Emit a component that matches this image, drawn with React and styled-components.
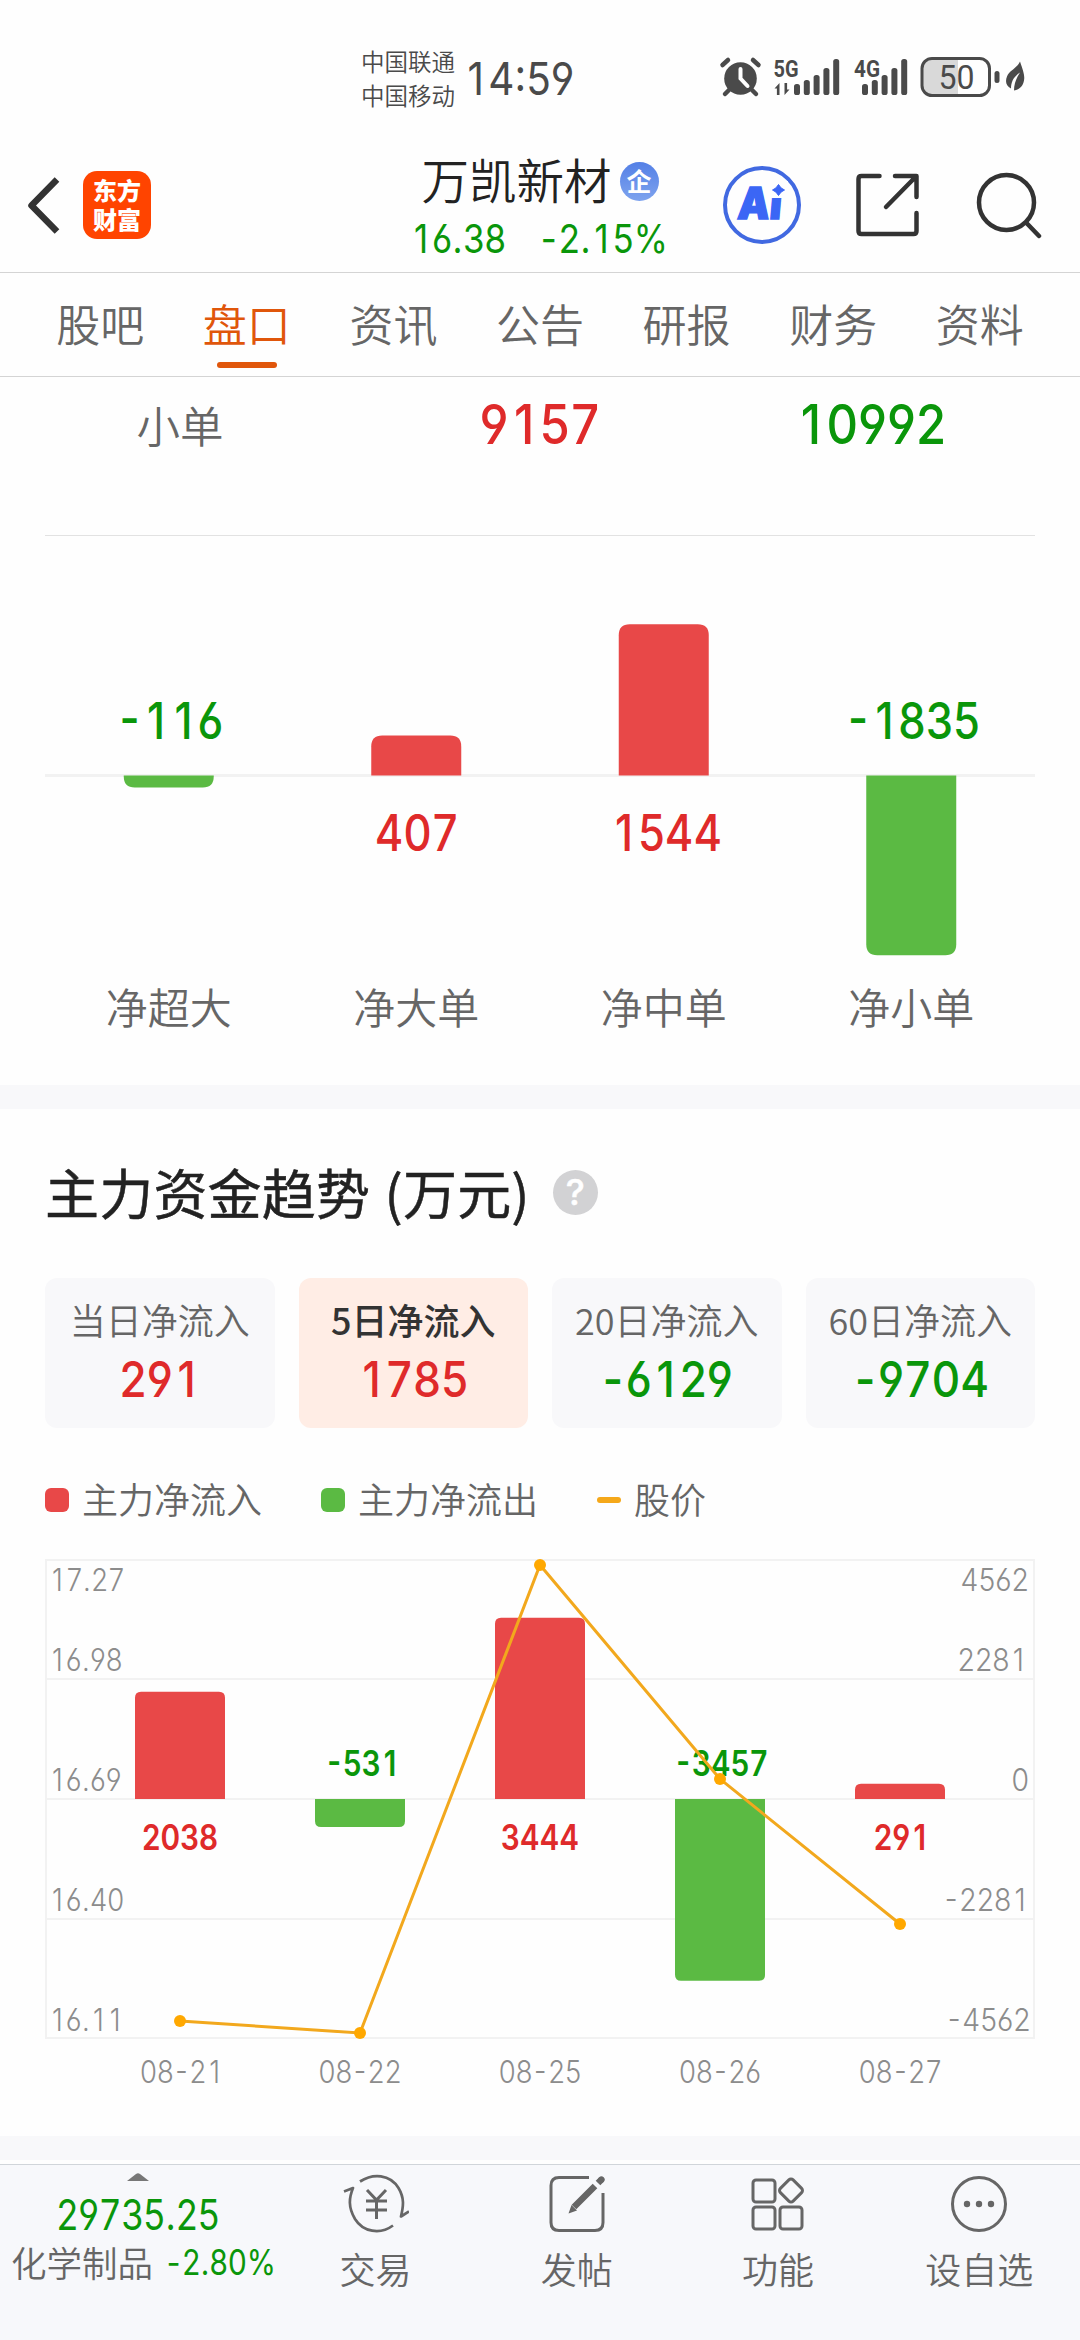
import React, { useState } from 'react';
import styled, { createGlobalStyle, css } from 'styled-components';

const CJK = '"Noto Sans CJK SC", sans-serif';
const LATIN = 'Inter, "Noto Sans CJK SC", sans-serif';
const RED = '#df2a2a';
const GREEN = '#0a960a';
const BAR_RED = '#e84848';
const BAR_GREEN = '#5bba43';

const GlobalStyle = createGlobalStyle`
  body {
    margin: 0;
    background: #fefefe;
    font-family: ${CJK};
    font-weight: 350;
    color: #666;
  }

  * {
    box-sizing: border-box;
  }
`;

const digits = css`
  font-family: ${LATIN};
  font-feature-settings: "cv03", "cv04";
  font-kerning: none;
`;

// side room (em) that evens out the narrow characters in a figure
const SIDE_ROOM = { 1: 0.11, '-': 0.06, 7: 0.03, '.': 0.01 };
const room = (ch) => SIDE_ROOM[ch] || 0;

const Figure = styled.span`
  ${digits}
  display: inline-block;
  font-size: ${(p) => p.$size}px;
  font-weight: ${(p) => p.$weight || 400};
  line-height: 1;
  color: ${(p) => p.$color || 'inherit'};
  transform: scaleX(${(p) => p.$stretch || 0.87});
  transform-origin: ${(p) => p.$origin || 'center'};
  white-space: nowrap;
`;

const Roomy = styled.span`
  margin: 0 ${(p) => p.$room}em;
`;

const Num = ({ children, ...rest }) => (
  <Figure {...rest}>
    {String(children).split(/([-17.])/).filter(Boolean).map((part, i) =>
      room(part) ? <Roomy key={i} $room={room(part)}>{part}</Roomy> : part
    )}
  </Figure>
);

const Page = styled.div`
  width: 1080px;
  height: 2340px;
  overflow: hidden;
  display: flex;
  flex-direction: column;
`;

const StatusBar = styled.div`
  height: 150px;
  padding: 43px 54px 37px 361px;
  display: flex;
  align-items: center;
  color: #4a4a4a;
`;

const Carriers = styled.div`
  width: 102px;
  font-size: 23.5px;
  line-height: 34px;
`;

const StatusIcons = styled.div`
  margin-left: auto;
  display: flex;

  svg {
    overflow: visible;
  }
`;

const Header = styled.header`
  height: 123px;
  border-bottom: 1px solid #d4d4d4;
  display: grid;
  grid-template-columns: 1fr auto 1fr;
`;

const HeaderLeft = styled.div`
  display: flex;
  align-items: center;
  gap: 22px;
  padding: 0 0 12px 25px;
`;

const Logo = styled.div`
  width: 68px;
  height: 68px;
  border-radius: 14px;
  background: #ff4400;
  color: #fff;
  font-size: 24px;
  font-weight: 900;
  line-height: 29px;
  padding-top: 4px;
  text-align: center;
`;

const HeaderTitle = styled.div`
  display: flex;
  flex-direction: column;
  align-items: center;
`;

const StockName = styled.div`
  height: 60px;
  margin-top: -1px;
  display: flex;
  align-items: center;
  gap: 8px;
  font-size: 47.5px;
  line-height: 60px;
  color: #222;
`;

const Badge = styled.span`
  width: 39px;
  height: 39px;
  margin-top: 4px;
  border-radius: 50%;
  background: linear-gradient(#5480e6, #7ea3ee);
  color: #fff;
  font-size: 25px;
  font-weight: 700;
  line-height: 37px;
  text-align: center;
`;

const Quote = styled.div`
  height: 60px;
  display: flex;
  align-items: center;
  gap: 16px;
`;

const HeaderActions = styled.div`
  display: flex;
  align-items: center;
  justify-content: flex-end;
  padding: 0 37px 12px 0;
  gap: 53px;
`;

const Tabs = styled.nav`
  height: 104px;
  padding: 0 27px;
  border-bottom: 1px solid #d4d4d4;
  display: flex;
`;

const Tab = styled.button`
  flex: 1;
  padding: 20px 0 0;
  border: none;
  background: none;
  display: flex;
  flex-direction: column;
  align-items: center;
  gap: 9px;
  font-family: inherit;
  font-weight: 350;
  font-size: 44px;
  line-height: 60px;
  color: ${(p) => (p.$active ? '#e0560b' : '#666')};

  &::after {
    content: '';
    width: 60px;
    height: 6px;
    border-radius: 3px;
    background: ${(p) => (p.$active ? '#e0560b' : 'transparent')};
  }
`;

const OrderRow = styled.div`
  height: 159px;
  margin: 0 45px;
  padding-bottom: 63px;
  border-bottom: 1px solid #e2e2e2;
  display: grid;
  grid-template-columns: 270px 450px 212px;
  align-items: center;
  justify-items: center;
`;

const OrderLabel = styled.span`
  font-size: 43.5px;
  line-height: 60px;
`;

const FlowSection = styled.section`
  height: 549px;
  padding: 0 45px;
`;

const Divider = styled.div`
  height: 24px;
  background: #f8f8fa;
`;

const TrendSection = styled.section`
  height: 1027px;
  padding: 0 45px;
`;

const TrendTitle = styled.h2`
  height: 169px;
  margin: 0;
  padding-top: 41px;
  display: flex;
  align-items: flex-start;
  gap: 23px;
  font-size: 54px;
  font-weight: 400;
  letter-spacing: 0.2px;
  word-spacing: 2px;
  line-height: 84px;
  -webkit-text-stroke: 0.5px;
  color: #222;
`;

const Help = styled.span`
  width: 45px;
  height: 45px;
  margin-top: 20px;
  border-radius: 50%;
  background: #d2d2d4;
  color: #fff;
  font: 500 36px/45px ${LATIN};
  text-align: center;
`;

const Cards = styled.div`
  display: grid;
  grid-template-columns: repeat(4, 1fr);
  gap: 24px;
`;

const Card = styled.button`
  height: 150px;
  padding: 19px 0 0;
  border: none;
  border-radius: 12px;
  background: ${(p) => (p.$active ? '#ffede5' : '#f8f8fa')};
  display: flex;
  flex-direction: column;
  align-items: center;
  gap: 13px;
`;

const CardLabel = styled.span`
  font-family: ${CJK};
  font-size: 36px;
  line-height: 44px;
  font-weight: ${(p) => (p.$active ? 500 : 350)};
  color: ${(p) => (p.$active ? '#333' : '#666')};
`;

const Legend = styled.div`
  height: 131px;
  padding-top: 42px;
  display: flex;
  align-items: flex-start;
  gap: 59px;
`;

const LegendItem = styled.div`
  display: flex;
  align-items: center;
  gap: 13px;
  font-size: 36px;
  line-height: 56px;

  &::before {
    content: '';
    width: 24px;
    height: ${(p) => (p.$line ? 6 : 24)}px;
    margin-top: 4px;
    border-radius: ${(p) => (p.$line ? 3 : 6)}px;
    background: ${(p) => p.$color};
  }
`;

const Chart = styled.svg`
  display: block;
  overflow: visible;
`;

const ChartFigure = styled.text`
  ${digits}
  font-size: ${(p) => p.$size}px;
  font-weight: ${(p) => p.$weight || 400};
  fill: ${(p) => p.$color};
  text-anchor: ${(p) => p.$anchor || 'middle'};
`;

const ChartLabel = styled.text`
  font-size: 42px;
  fill: #666;
  text-anchor: middle;
`;

const Footer = styled.footer`
  flex: 1;
  margin-top: 4px;
  border-top: 1px solid #d0d5da;
  background: #f7f8fb;
  display: flex;
`;

const IndexBox = styled.div`
  width: 275px;
  padding-top: 8px;
  display: flex;
  flex-direction: column;
  align-items: center;
`;

const IndexValue = styled.div`
  height: 61px;
  padding-top: 13px;
  line-height: 1;
`;

const IndexName = styled.div`
  align-self: flex-start;
  width: 275px;
  height: 40px;
  padding-left: 11px;
  display: flex;
  align-items: center;
  gap: 12px;
  font-size: 35.5px;
  line-height: 40px;
  white-space: nowrap;
`;

const FooterItem = styled.div`
  flex: 1;
  padding-top: 9px;
  display: flex;
  flex-direction: column;
  align-items: center;
  gap: 10px;
  font-size: 36px;
  line-height: 48px;
`;

const SignalBars = ({ x }) =>
  [11, 15, 20, 27, 36].map((h, i) => (
    <rect key={h} x={x + i * 9.8} y={38 - h} width="6" height={h} rx="2.6" />
  ));

const StatusSvg = () => (
  <svg width="307" height="42" viewBox="0 0 307 42" fill="#4a4a4a">
    <circle cx="21.500" cy="21.500" r="16.300" />
    <path d="M3.500 8l5.500-5M39.500 8l-5.500-5M6 37l4-4M37 37l-4-4" stroke="#4a4a4a" strokeWidth="4.500" strokeLinecap="round" />
    <path d="M21.500 12v9.500l7 7.500" stroke="#fff" strokeWidth="4" fill="none" strokeLinecap="round" />
    <text x="54.500" y="20" fontFamily="Roboto" fontWeight="700" fontSize="24" textLength="25" lengthAdjust="spacingAndGlyphs">5G</text>
    <path d="M55.500 31.500l5-5.500v12h-2.600v-6.500zM70.500 32.500l-5 5.500v-12h2.600v6.500z" />
    <SignalBars x={75} />
    <text x="135" y="20" fontFamily="Roboto" fontWeight="700" fontSize="24" textLength="26" lengthAdjust="spacingAndGlyphs">4G</text>
    <SignalBars x={143} />
    <path d="M213 1.500h26v37h-26q-10-1-10-10v-17q0-9 10-10z" fill="#d9d9d9" />
    <rect x="203" y="1.500" width="67.500" height="37" rx="10" fill="none" stroke="#4a4a4a" strokeWidth="3" />
    <text x="219.500" y="32" fontFamily="Roboto" fontWeight="400" fontSize="34" textLength="36" lengthAdjust="spacingAndGlyphs">50</text>
    <rect x="275.500" y="14" width="5" height="12" rx="2.500" />
    <path d="M301 4.500c3 9 5 14 4 19-1 6-5 9-10 10 0-6 2-12 6-18-6 4-9 9-9 16-5-3-6-7-4-12 2-6 10-8 13-15z" />
  </svg>
);

const BackIcon = () => (
  <svg width="36" height="60" viewBox="0 0 36 60" fill="none" stroke="#333" strokeWidth="6.500">
    <path d="M32 4.500L6.500 30.500L32 56.500" strokeLinejoin="round" />
  </svg>
);

const AiIcon = () => (
  <svg width="80" height="80" viewBox="0 0 80 80" fill="#3b66f5">
    <circle cx="39" cy="40" r="37" fill="none" stroke="#4169e1" strokeWidth="4" />
    <g transform="skewX(-5)">
      <text x="18.500" y="54" fontFamily="Inter" fontWeight="900" fontSize="44" textLength="44" lengthAdjust="spacingAndGlyphs" stroke="#3b66f5" strokeWidth="1.500">Ai</text>
    </g>
    <path d="M47 16h18v17h-18z" fill="#fefefe" />
    <path d="M55.500 19.500q2 4 6 5.500-4 1.500-6 5.500-2-4-6-5.500 4-1.500 6-5.500z" stroke="#3b66f5" strokeLinejoin="round" />
  </svg>
);

const ShareIcon = () => (
  <svg width="66" height="66" viewBox="0 0 66 66" fill="none" stroke="#333" strokeWidth="4.500" strokeLinecap="round" strokeLinejoin="round">
    <path d="M23.500 4H5.500q-3 0-3 3v52q0 3 3 3h52q3 0 3-3V41M39 4h21.500v21M60 4.500L30 35" />
  </svg>
);

const SearchIcon = () => (
  <svg width="68" height="68" viewBox="0 0 68 68" fill="none" stroke="#333" strokeWidth="4.500" strokeLinecap="round">
    <circle cx="31.500" cy="31.500" r="27.500" />
    <path d="M52 52.500l12 12.500" />
  </svg>
);

const TradeIcon = () => (
  <svg width="66" height="60" viewBox="0 0 66 60" fill="none" stroke="#666" strokeWidth="2.700">
    <path d="M17 7.500C30-1 47 0 55.500 14c6 10 5 18 2.500 28.500l8-5M50 51.500C37 61 20 58 12 45 5 33 6 24 10 14l-9 3.500" strokeLinejoin="round" />
    <path d="M24 16l9.500 10 9.500-10M33.500 26v19M23 27h21M23 36h21" strokeWidth="3" />
  </svg>
);

const PostIcon = () => (
  <svg width="60" height="60" viewBox="0 0 60 60" fill="none" stroke="#666" strokeWidth="3">
    <path d="M42 3.500H12q-8 0-8 8v37q0 8 8 8h36q8 0 8-8V19" />
    <path d="M27 33L48 12M51 9l3.500-3.500" strokeWidth="6.500" />
    <path d="M54.300 5.700l.1-.1" strokeWidth="6.500" strokeLinecap="round" />
    <path d="M24.500 31l-3 8.500 8.500-3z" fill="#666" stroke="none" />
  </svg>
);

const AppsIcon = () => (
  <svg width="60" height="60" viewBox="0 0 60 60" fill="none" stroke="#666" strokeWidth="3">
    <rect x="5" y="6" width="22" height="22" rx="3" />
    <rect x="5" y="33" width="22" height="22" rx="3" />
    <rect x="32" y="33" width="22" height="22" rx="3" />
    <rect x="34" y="7.500" width="18" height="18" rx="3" transform="rotate(45 43 16.500)" />
  </svg>
);

const MoreIcon = () => (
  <svg width="60" height="60" viewBox="0 0 60 60" fill="#666">
    <circle cx="30" cy="30" r="26.500" fill="none" stroke="#666" strokeWidth="3" />
    <circle cx="18" cy="30" r="3.200" />
    <circle cx="30" cy="30" r="3.200" />
    <circle cx="42" cy="30" r="3.200" />
  </svg>
);

const tabs = ['股吧', '盘口', '资讯', '公告', '研报', '财务', '资料'];

const orderFlow = [
  { label: '净超大', value: -116 },
  { label: '净大单', value: 407 },
  { label: '净中单', value: 1544 },
  { label: '净小单', value: -1835 },
];

const periods = [
  { label: '当日净流入', value: 291 },
  { label: '5日净流入', value: 1785 },
  { label: '20日净流入', value: -6129 },
  { label: '60日净流入', value: -9704 },
];

const days = [
  { date: '08-21', flow: 2038, priceY: 462 },
  { date: '08-22', flow: -531, priceY: 474 },
  { date: '08-25', flow: 3444, priceY: 6 },
  { date: '08-26', flow: -3457, priceY: 220 },
  { date: '08-27', flow: 291, priceY: 365 },
];

const axis = [
  { price: '17.27', flow: '4562', y: 32 },
  { price: '16.98', flow: '2281', y: 112 },
  { price: '16.69', flow: '0', y: 232 },
  { price: '16.40', flow: '-2281', y: 352 },
  { price: '16.11', flow: '-4562', y: 472 },
];

const footerItems = [
  { label: '交易', Icon: TradeIcon },
  { label: '发帖', Icon: PostIcon },
  { label: '功能', Icon: AppsIcon },
  { label: '设自选', Icon: MoreIcon },
];

const ChartNum = ({ x, y, stretch = 0.87, children, ...rest }) => {
  const text = String(children);
  const dx = [...text].map((ch, i) => ((i ? room(text[i - 1]) : 0) + room(ch)) * rest.$size);
  // the room after the last character is not part of dx
  const tail = room(text[text.length - 1]) * rest.$size;
  const left = rest.$anchor === 'end' ? x - tail * 1.5 : x;
  return (
    <ChartFigure {...rest} dx={dx.join(' ')} transform={`translate(${left} ${y}) scale(${stretch} 1)`}>
      {text}
    </ChartFigure>
  );
};

// bar that grows from the zero line, rounded only at its far end
const barPath = (cx, zero, h, up, r) => {
  const s = up ? -1 : 1;
  const left = cx - 45;
  const right = cx + 45;
  const end = zero + s * h;
  const c = Math.min(r, h);
  return `M${left} ${zero}V${end - s * c}Q${left} ${end} ${left + c} ${end}H${right - c}Q${right} ${end} ${right} ${end - s * c}V${zero}Z`;
};

const OrderFlowChart = () => (
  <Chart width="990" height="549">
    <rect x="0" y="238" width="990" height="3" fill="#f2f2f2" />
    {orderFlow.map(({ label, value }, i) => {
      const cx = 123.75 + i * 247.5;
      const up = value > 0;
      const height = Math.max(Math.abs(value) * 0.098, 12);
      return (
        <g key={label}>
          <path d={barPath(cx, 239.5, height, up, 11)} fill={up ? BAR_RED : BAR_GREEN} />
          <ChartNum $size={50} $weight={500} $color={up ? RED : GREEN} x={cx} y={up ? 315 : 203}>
            {value}
          </ChartNum>
          <ChartLabel x={cx} y={488}>{label}</ChartLabel>
        </g>
      );
    })}
  </Chart>
);

const TrendChart = () => (
  <Chart width="990" height="540">
    <rect x="1" y="1" width="988" height="478" fill="none" stroke="#f2f2f2" strokeWidth="2" />
    <path d="M0 120h990M0 240h990M0 360h990" stroke="#f2f2f2" strokeWidth="2" />
    {axis.map((tick) => (
      <g key={tick.price}>
        <ChartNum $size={30.5} $weight={300} $color="#8c8c8c" $anchor="start" stretch={0.9} x={4} y={tick.y}>{tick.price}</ChartNum>
        <ChartNum $size={30.5} $weight={300} $color="#8c8c8c" $anchor="end" stretch={0.93} x={984} y={tick.y}>{tick.flow}</ChartNum>
      </g>
    ))}
    {days.map(({ date, flow }, i) => {
      const cx = 135 + i * 180;
      const up = flow > 0;
      return (
        <g key={date}>
          <path d={barPath(cx, 240, Math.abs(flow) * 0.0526, up, 6)} fill={up ? BAR_RED : BAR_GREEN} />
          <ChartNum $size={35} $weight={600} $color={up ? RED : GREEN} stretch={0.85} x={cx} y={up ? 291 : 217}>
            {flow}
          </ChartNum>
          <ChartNum $size={30.5} $weight={300} $color="#8c8c8c" stretch={0.9} x={cx} y={524}>{date}</ChartNum>
        </g>
      );
    })}
    <polyline
      points={days.map((d, i) => `${135 + i * 180},${d.priceY}`).join(' ')}
      fill="none"
      stroke="#f2a81d"
      strokeWidth="3"
    />
    {days.map((d, i) => (
      <circle key={d.date} cx={135 + i * 180} cy={d.priceY} r="6" fill="#ffa800" />
    ))}
  </Chart>
);

const App = () => {
  const [tab, setTab] = useState('盘口');
  const [period, setPeriod] = useState('5日净流入');

  return (
    <Page>
      <GlobalStyle />
      <StatusBar>
        <Carriers>
          <div>中国联通</div>
          <div>中国移动</div>
        </Carriers>
        <Num $size={45} $stretch={0.9} $origin="left">14:59</Num>
        <StatusIcons>
          <StatusSvg />
        </StatusIcons>
      </StatusBar>

      <Header>
        <HeaderLeft>
          <BackIcon />
          <Logo>东方<br />财富</Logo>
        </HeaderLeft>
        <HeaderTitle>
          <StockName>万凯新材<Badge>企</Badge></StockName>
          <Quote>
            <Num $size={40} $color={GREEN}>16.38</Num>
            <Num $size={40} $color={GREEN}>-2.15%</Num>
          </Quote>
        </HeaderTitle>
        <HeaderActions>
          <AiIcon />
          <ShareIcon />
          <SearchIcon />
        </HeaderActions>
      </Header>

      <Tabs>
        {tabs.map((name) => (
          <Tab key={name} $active={name === tab} onClick={() => setTab(name)}>{name}</Tab>
        ))}
      </Tabs>

      <OrderRow>
        <OrderLabel>小单</OrderLabel>
        <Num $size={55} $weight={500} $stretch={0.89} $color={RED}>9157</Num>
        <Num $size={55} $weight={500} $stretch={0.89} $color={GREEN}>10992</Num>
      </OrderRow>

      <FlowSection>
        <OrderFlowChart />
      </FlowSection>
      <Divider />

      <TrendSection>
        <TrendTitle>主力资金趋势 (万元)<Help>?</Help></TrendTitle>
        <Cards>
          {periods.map(({ label, value }) => (
            <Card key={label} $active={label === period} onClick={() => setPeriod(label)}>
              <CardLabel $active={label === period}>{label}</CardLabel>
              <Num $size={50} $weight={500} $stretch={0.88} $color={value > 0 ? RED : GREEN}>{value}</Num>
            </Card>
          ))}
        </Cards>
        <Legend>
          <LegendItem $color={BAR_RED}>主力净流入</LegendItem>
          <LegendItem $color={BAR_GREEN}>主力净流出</LegendItem>
          <LegendItem $color="#f5a81a" $line>股价</LegendItem>
        </Legend>
        <TrendChart />
      </TrendSection>
      <Divider />

      <Footer>
        <IndexBox>
          <svg width="22" height="8"><path d="M0 8L9 1q2-1.500 4 0l9 7z" fill="#777" /></svg>
          <IndexValue>
            <Num $size={42} $stretch={0.85} $color={GREEN}>29735.25</Num>
          </IndexValue>
          <IndexName>
            化学制品<Num $size={35} $stretch={0.85} $color={GREEN} $origin="left">-2.80%</Num>
          </IndexName>
        </IndexBox>
        {footerItems.map(({ label, Icon }) => (
          <FooterItem key={label}>
            <Icon />
            <span>{label}</span>
          </FooterItem>
        ))}
      </Footer>
    </Page>
  );
};

export default App;
